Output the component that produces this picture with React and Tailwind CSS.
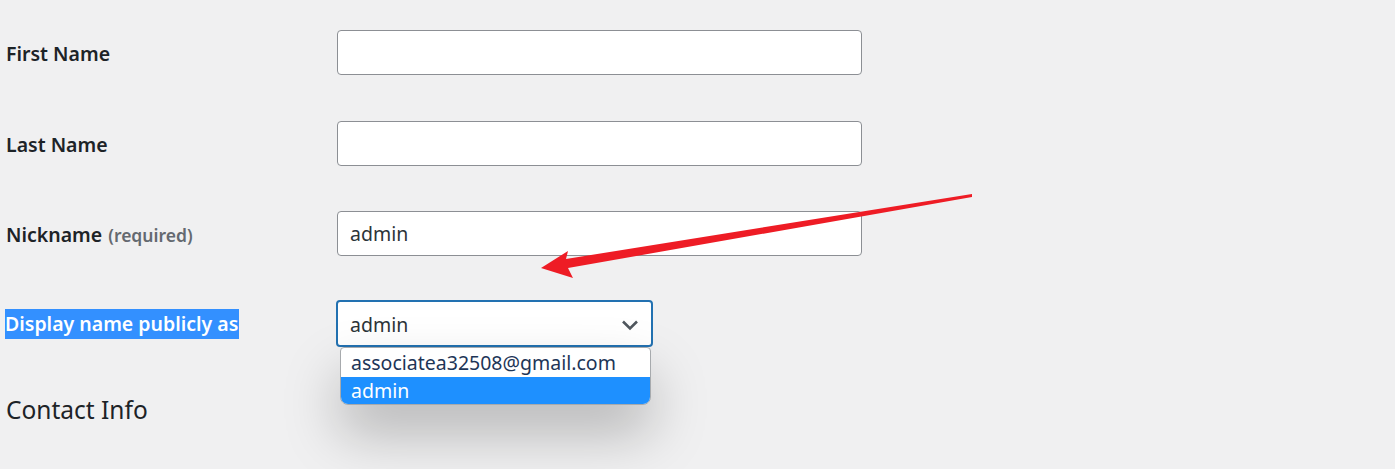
import React from 'react';

const font = { fontFamily: '"Noto Sans", "Open Sans", Arial, sans-serif' };

const TextRow = ({ label, extra, value, h }) => (
  <div className={`flex items-start ${h}`}>
    <div className="w-[337px] shrink-0 pl-[6px] pt-[9px] text-[19.5px] font-semibold text-[#1d2327]">
      {label}
      {extra && <span className="ml-[6px] text-[17.5px] font-semibold text-[#646970]">{extra}</span>}
    </div>
    <div className="flex h-[45px] w-[525px] items-center rounded-[4px] border border-[#8c8f94] bg-white px-[12px] pt-[1px] text-[19.5px] text-[#2c3338]">
      {value}
    </div>
  </div>
);

const Arrow = () => (
  <svg className="pointer-events-none absolute left-0 top-0" width="1395" height="469">
    <polygon
      points="972,194 566,259 568,251 541,268 573,278 568,268 972,197"
      fill="#ee1c25"
    />
  </svg>
);

export default function App() {
  return (
    <div className="relative h-[469px] w-[1395px] overflow-hidden bg-[#f0f0f1]" style={font}>
      <div className="pt-[30px]">
        <TextRow label="First Name" h="h-[91px]" />
        <TextRow label="Last Name" h="h-[90px]" />
        <TextRow label="Nickname" extra="(required)" value="admin" h="h-[89px]" />

        <div className="flex h-[80px] items-start">
          <div className="w-[336px] shrink-0 pl-[5px] pt-[9px]">
            <span className="inline-block bg-[#3390ff] pr-[1px] text-[19.5px] font-semibold leading-[30px] text-white">
              Display name publicly as
            </span>
          </div>
          <div className="relative w-[317px]">
            <div className="flex h-[47px] items-center justify-between rounded-[4px] border-2 border-[#2271b1] bg-white pl-[12px] pr-[11px] pt-[2px] text-[19.5px] text-[#2c3338]">
              <span>admin</span>
              <svg width="20" height="20" viewBox="0 0 20 20">
                <path d="M3 6.5l7 7 7-7" fill="none" stroke="#50575e" strokeWidth="2.6" />
              </svg>
            </div>
            <div className="absolute left-[4px] top-[47px] z-10 w-[311px] overflow-hidden rounded-b-[8px] rounded-t-[4px] border border-[#a7aaad] bg-white text-[19.5px] shadow-[0_28px_55px_rgba(0,0,0,0.25)]">
              <div className="h-[29px] pl-[10px] leading-[29px] text-[#1d3557]">associatea32508@gmail.com</div>
              <div className="h-[27px] bg-[#1e90ff] pl-[10px] leading-[27px] text-white">admin</div>
            </div>
          </div>
        </div>

        <h2 className="pl-[6px] pt-[12px] text-[24.5px] font-normal text-[#1d2327]">Contact Info</h2>
      </div>
      <Arrow />
    </div>
  );
}
